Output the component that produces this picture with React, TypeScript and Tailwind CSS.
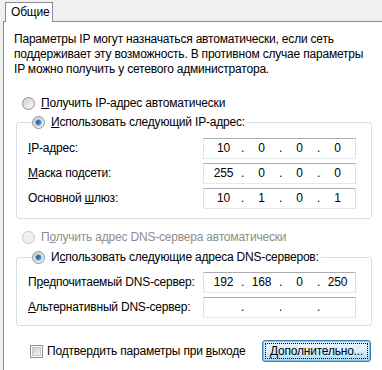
import type { ReactNode } from "react";

function Radio({ checked = false, disabled = false }: { checked?: boolean; disabled?: boolean }) {
  return (
    <span
      className={`relative inline-flex h-[13px] w-[13px] shrink-0 items-center justify-center rounded-full border ${
        disabled ? "border-[#c5c5c5] bg-[#f4f4f4]" : "border-[#8e8f8f] bg-gradient-to-br from-[#d2d4d6] to-[#f7f7f7]"
      }`}
    >
      <span
        className={`h-[9px] w-[9px] rounded-full ${
          disabled ? "bg-[#f0f0f0]" : "bg-gradient-to-br from-[#cfd1d3] to-[#fbfbfb]"
        }`}
      />
      {checked && (
        <span className="absolute h-[5px] w-[5px] rounded-full bg-gradient-to-br from-[#0a3f84] to-[#5aa3e6] shadow-[0_0_1px_1px_#7eb6e8]" />
      )}
    </span>
  );
}

function IpBox({ values }: { values: string[] }) {
  return (
    <div className="flex h-[21px] w-[153px] shrink-0 items-center border border-[#abadb3] border-b-[#e3e9ef] border-l-[#e2e3ea] border-r-[#dbdfe6] bg-white pl-[4px]">
      {values.map((v, i) => (
        <div key={i} className="flex">
          {i > 0 && <span className="w-[7px] text-center">.</span>}
          <span className="w-[31px] text-center">{v}</span>
        </div>
      ))}
    </div>
  );
}

function Row({ label, values }: { label: ReactNode; values: string[] }) {
  return (
    <div className="flex h-[21px] items-center justify-between">
      <span className="whitespace-nowrap">{label}</span>
      <IpBox values={values} />
    </div>
  );
}

export default function App() {
  return (
    <div
      className="flex h-[370px] w-[382px] flex-col overflow-hidden whitespace-nowrap bg-[#f0f0f0] pl-[3px] text-[12px] leading-[15px] tracking-[-0.2px] text-black"
      style={{ fontFamily: '"Liberation Sans", Arial, sans-serif' }}
    >
      {/* Tab strip */}
      <div className="flex h-[21px] items-end">
        <div className="relative z-10 -mb-px ml-[2px] flex h-[20px] w-[48px] items-center border border-b-0 border-[#898c95] bg-white pl-[5px]">
          Общие
        </div>
      </div>

      {/* Panel */}
      <div className="flex-1 border-l border-t border-[#898c95] bg-white pl-[10px] pt-[10px]">
        <p>
          Параметры IP могут назначаться автоматически, если сеть
          <br />
          поддерживает эту возможность. В противном случае параметры
          <br />
          IP можно получить у сетевого администратора.
        </p>

        <div className="mt-[17px] flex h-[18px] items-center gap-[6px] pl-[8px]">
          <Radio />
          <span>
            <u>П</u>олучить IP-адрес автоматически
          </span>
        </div>

        <fieldset className="ml-[2px] mt-[1px] w-[356px] rounded-[3px] border border-[#d5dfe5] pb-[9px] pl-[11px] pr-[15px]">
          <legend className="ml-[4px] flex h-[18px] items-center gap-[6px] pr-[2px]">
            <Radio checked />
            <span>
              <u>И</u>спользовать следующий IP-адрес:
            </span>
          </legend>
          <div className="mt-[7px] flex flex-col gap-[4px]">
            <Row
              label={
                <>
                  <u>I</u>P-адрес:
                </>
              }
              values={["10", "0", "0", "0"]}
            />
            <Row
              label={
                <>
                  <u>М</u>аска подсети:
                </>
              }
              values={["255", "0", "0", "0"]}
            />
            <Row
              label={
                <>
                  Основной <u>ш</u>люз:
                </>
              }
              values={["10", "1", "0", "1"]}
            />
          </div>
        </fieldset>

        <div className="mt-[9px] flex h-[18px] items-center gap-[6px] pl-[8px] text-[#8d8d8d]">
          <Radio disabled />
          <span>
            П<u>о</u>лучить адрес DNS-сервера автоматически
          </span>
        </div>

        <fieldset className="ml-[2px] mt-[2px] w-[356px] rounded-[3px] border border-[#d5dfe5] pb-[7px] pl-[11px] pr-[15px]">
          <legend className="ml-[4px] flex h-[18px] items-center gap-[6px] pr-[2px]">
            <Radio checked />
            <span>
              И<u>с</u>пользовать следующие адреса DNS-серверов:
            </span>
          </legend>
          <div className="mt-[6px] flex flex-col gap-[4px]">
            <Row
              label={
                <>
                  П<u>р</u>едпочитаемый DNS-сервер:
                </>
              }
              values={["192", "168", "0", "250"]}
            />
            <Row
              label={
                <>
                  <u>А</u>льтернативный DNS-сервер:
                </>
              }
              values={["", "", "", ""]}
            />
          </div>
        </fieldset>

        <div className="mt-[14px] flex items-center justify-between pr-[11px]">
          <div className="flex items-center gap-[4px] pl-[16px]">
            <span className="flex h-[13px] w-[13px] items-center justify-center border border-[#8e8f8f] bg-white">
              <span className="h-[9px] w-[9px] border border-[#c5c8cc] bg-gradient-to-br from-[#cbcfd5] to-[#f6f6f6]" />
            </span>
            <span>
              Подтвердить параметры при <u>в</u>ыходе
            </span>
          </div>
          <button className="flex h-[22px] w-[109px] items-center justify-center rounded-[3px] border border-[#3c7fb1] bg-gradient-to-b from-[#eaf6fd] via-[#d9f0fc] to-[#a7d9f5] p-[2px] shadow-[inset_0_0_0_1px_#7ec5ea]">
            <span className="flex h-full w-full items-center justify-center border border-dotted border-black">
              Дополнительно...
            </span>
          </button>
        </div>
      </div>
    </div>
  );
}
